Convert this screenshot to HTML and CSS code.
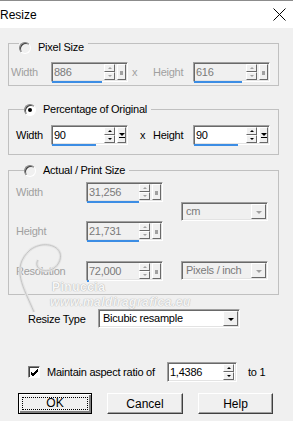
FILE: index.html
```html
<!DOCTYPE html>
<html lang="en">
<head>
    <meta charset="UTF-8">
    <meta name="viewport" content="width=device-width, initial-scale=1.0">
    <title>Resize</title>
    <link rel="stylesheet" href="styles.css">
</head>
<body>

    <div class="window">

        <!-- Title bar -->
        <div class="titlebar">
            <span class="title">Resize</span>
            <svg class="close" width="13" height="13" viewBox="0 0 13 13">
                <path d="M0.5 0.5 L12.5 12.5 M12.5 0.5 L0.5 12.5" stroke="#000" stroke-width="1" fill="none"/>
            </svg>
        </div>

        <div class="content">

            <!-- Pixel size -->
            <fieldset class="group group-pixel off">
                <legend><span class="radio"></span>Pixel Size</legend>
                <div class="row">
                    <span class="lbl lbl-w1">Width</span>
                    <div class="spin">
                        <span class="val">886</span>
                        <span class="arrows"><i class="up"></i><i class="down"></i></span>
                        <span class="extra"><b class="sq"></b></span>
                        <span class="focus f-50"></span>
                    </div>
                    <span class="times t1">x</span>
                    <span class="lbl lbl-h">Height</span>
                    <div class="spin">
                        <span class="val">616</span>
                        <span class="arrows"><i class="up"></i><i class="down"></i></span>
                        <span class="extra"><b class="sq"></b></span>
                        <span class="focus f-48"></span>
                    </div>
                </div>
            </fieldset>

            <!-- Percentage -->
            <fieldset class="group group-pct">
                <legend><span class="radio checked"></span>Percentage of Original</legend>
                <div class="row">
                    <span class="lbl lbl-w2">Width</span>
                    <div class="spin on">
                        <span class="val">90</span>
                        <span class="arrows"><i class="up"></i><i class="down"></i></span>
                        <span class="extra"><b class="drop"></b></span>
                        <span class="focus f-44"></span>
                    </div>
                    <span class="times t2">x</span>
                    <span class="lbl lbl-h2">Height</span>
                    <div class="spin on">
                        <span class="val">90</span>
                        <span class="arrows"><i class="up"></i><i class="down"></i></span>
                        <span class="extra"><b class="drop"></b></span>
                        <span class="focus f-44"></span>
                    </div>
                </div>
            </fieldset>

            <!-- Actual / print size -->
            <fieldset class="group group-print off">
                <legend><span class="radio"></span>Actual / Print Size</legend>
                <div class="print-grid">
                    <span class="lbl">Width</span>
                    <div class="spin">
                        <span class="val">31,256</span>
                        <span class="arrows"><i class="up"></i><i class="down"></i></span>
                        <span class="extra"><b class="sq"></b></span>
                        <span class="focus f-52"></span>
                    </div>
                    <div class="combo combo-unit">
                        <span class="combo-text">cm</span>
                        <span class="combo-btn"><i class="down"></i></span>
                    </div>

                    <span class="lbl">Height</span>
                    <div class="spin">
                        <span class="val">21,731</span>
                        <span class="arrows"><i class="up"></i><i class="down"></i></span>
                        <span class="extra"><b class="sq"></b></span>
                        <span class="focus f-52"></span>
                    </div>

                    <span class="lbl">Resolution</span>
                    <div class="spin">
                        <span class="val">72,000</span>
                        <span class="arrows"><i class="up"></i><i class="down"></i></span>
                        <span class="extra"><b class="sq"></b></span>
                        <span class="focus f-2"></span>
                    </div>
                    <div class="combo combo-res">
                        <span class="combo-text">Pixels / inch</span>
                        <span class="combo-btn"><i class="down"></i></span>
                    </div>
                </div>
            </fieldset>

            <!-- Resize type -->
            <div class="type-row">
                <span class="type-lbl">Resize Type</span>
                <div class="combo combo-type on">
                    <span class="combo-text">Bicubic resample</span>
                    <span class="combo-btn"><i class="down"></i></span>
                </div>
            </div>

            <!-- Aspect ratio -->
            <div class="aspect-row">
                <span class="check">
                    <svg width="9" height="9" viewBox="0 0 9 9">
                        <path d="M1 4 L3 6 L8 1 M1 5 L3 7 L8 2 M1 6 L3 8 L8 3" stroke="#000" stroke-width="1" fill="none"/>
                    </svg>
                </span>
                <span class="aspect-lbl">Maintain aspect ratio of</span>
                <div class="spin on spin-ratio">
                    <span class="val">1,4386</span>
                    <span class="arrows"><i class="up"></i><i class="down"></i></span>
                </div>
                <span class="to-one">to 1</span>
            </div>

            <!-- Buttons -->
            <div class="buttons">
                <button class="btn btn-default"><span>OK</span></button>
                <button class="btn btn-cancel">Cancel</button>
                <button class="btn btn-help">Help</button>
            </div>
        </div>

        <!-- Watermark -->
        <div class="watermark">
            <svg class="wm-swirl" width="70" height="90" viewBox="0 0 70 90">
                <path d="M30 86 C20 62 6 42 26 24 C42 12 64 22 54 38 C46 50 28 44 34 34" stroke="#e4e4e4" stroke-width="3" fill="none"/>
                <path d="M30 86 C20 62 6 42 26 24 C42 12 64 22 54 38 C46 50 28 44 34 34" stroke="#c6c6c6" stroke-width="1" fill="none"/>
            </svg>
            <span class="wm-name">Pinuccia</span>
            <span class="wm-url">www.maldiragrafica.eu</span>
        </div>
    </div>

</body>
</html>
```

FILE: styles.css
```css
body {
    margin: 0;
    font-family: "Liberation Sans", Arial, sans-serif;
    font-size: 11px;
    letter-spacing: -0.25px;
    color: #000;
    background: #f0f0f0;
}

.window {
    position: relative;
    width: 293px;
    height: 421px;
    overflow: hidden;
    background: #f0f0f0;
}

/* title bar */
.titlebar {
    height: 27px;
    background: #fff;
    border-top: 1px solid #8c8c8c;
    display: flex;
    align-items: center;
    justify-content: space-between;
    font-size: 12px;
    letter-spacing: 0;
}
.close {
    margin-right: 7px;
}

.content {
    padding: 5px 14px 0 8px;
}

/* group boxes */
.group {
    margin: 0;
    padding: 0 0 3px 2px;
    border: 1px solid #c0c0c0;
    min-width: 0;
}
.group legend {
    margin-left: 8px;
    padding: 0 4px 0 0;
    line-height: 13px;
    display: flex;
    align-items: center;
}
.group-pixel legend {
    padding-top: 8px;
}
.group-pct {
    margin-top: 17px;
    padding: 0 0 9px 7px;
}
.group-print {
    margin-top: 9px;
    padding: 0 0 13px 7px;
}

.radio {
    display: inline-block;
    width: 10px;
    height: 10px;
    margin-right: 7px;
    border-radius: 50%;
    border: 1px solid;
    border-color: #808080 #fff #fff #808080;
    box-shadow: inset 1px 1px 0 #404040;
    background: #f0f0f0;
    position: relative;
}
.radio.checked {
    background: #fff;
}
.radio.checked::after {
    content: "";
    position: absolute;
    left: 3px;
    top: 3px;
    width: 4px;
    height: 4px;
    border-radius: 50%;
    background: #000;
}

.row {
    display: flex;
    align-items: center;
    height: 20px;
    margin-top: 8px;
}
.group-pct .row {
    margin-top: 9px;
}

.lbl {
    color: #000;
}
.off .lbl {
    color: #a0a0a0;
}
.lbl-w1 { width: 40px; }
.lbl-w2 { width: 35px; }
.lbl-h { width: 40px; margin-left: 15px; }
.lbl-h2 { width: 40px; margin-left: 7px; }
.times { width: 6px; }
.t1 { margin-left: 4px; color: #a0a0a0; }
.t2 { margin-left: 12px; }

/* spin edit */
.spin {
    position: relative;
    display: flex;
    box-sizing: border-box;
    width: 77px;
    height: 20px;
    border: 1px solid;
    border-color: #a0a0a0 #fff #fff #a0a0a0;
    box-shadow: inset 1px 1px 0 #696969, inset -1px -1px 0 #e3e3e3;
    padding: 1px 1px 1px 2px;
    background: #f0f0f0;
}
.spin.on {
    background: #fff;
}
.val {
    flex: 1;
    line-height: 16px;
    color: #7a7a7a;
}
.spin.on .val {
    color: #000;
}
.arrows {
    width: 11px;
    display: flex;
    flex-direction: column;
    margin-right: 2px;
}
.arrows i, .extra, .combo-btn {
    position: relative;
    box-sizing: border-box;
    background: #f0f0f0;
    border: 1px solid;
    border-color: #fff #696969 #696969 #fff;
}
.arrows i {
    flex: 1;
}
.arrows i::after, .combo-btn i::after {
    content: "";
    position: absolute;
    left: 50%;
    top: 50%;
    margin-left: -2px;
    margin-top: -1px;
    border-left: 2px solid transparent;
    border-right: 2px solid transparent;
}
.arrows .up::after {
    border-bottom: 2px solid #a0a0a0;
}
.arrows .down::after {
    border-top: 2px solid #a0a0a0;
}
.spin.on .arrows .up::after {
    border-bottom-color: #000;
}
.spin.on .arrows .down::after {
    border-top-color: #000;
}
.extra {
    width: 9px;
}
.extra .sq {
    position: absolute;
    left: 2px;
    top: 6px;
    width: 3px;
    height: 4px;
    background: #a0a0a0;
}
.extra .drop {
    position: absolute;
    left: 1px;
    top: 5px;
    border-left: 3px solid transparent;
    border-right: 3px solid transparent;
    border-top: 3px solid #000;
}
.extra .drop::after {
    content: "";
    position: absolute;
    left: -3px;
    top: 1px;
    width: 6px;
    border-top: 1px solid #000;
}
.focus {
    position: absolute;
    left: 0;
    bottom: -2px;
    height: 2px;
    background: #3c8de4;
}
.f-50 { width: 50px; }
.f-48 { width: 48px; }
.f-44 { width: 44px; }
.f-52 { width: 52px; }
.f-2 { width: 2px; }

/* print size grid */
.print-grid {
    display: grid;
    grid-template-columns: 52px 77px 87px;
    grid-template-rows: 20px 20px 21px;
    column-gap: 18px;
    row-gap: 19px;
    align-items: center;
    margin-top: 5px;
}
.combo-unit {
    grid-column: 3;
    grid-row: 1 / 3;
}
.combo-res {
    grid-column: 3;
    grid-row: 3;
}

/* combo box */
.combo {
    display: flex;
    box-sizing: border-box;
    height: 19px;
    border: 1px solid;
    border-color: #a0a0a0 #fff #fff #a0a0a0;
    box-shadow: inset 1px 1px 0 #696969, inset -1px -1px 0 #e3e3e3;
    padding: 1px;
    background: #f0f0f0;
}
.combo.on {
    background: #fff;
}
.combo-text {
    flex: 1;
    padding-left: 3px;
    line-height: 15px;
    color: #7a7a7a;
    white-space: nowrap;
}
.combo.on .combo-text {
    color: #000;
}
.combo-btn {
    width: 15px;
}
.combo-btn i::after {
    border-left-width: 3px;
    border-right-width: 3px;
    margin-left: -3px;
    border-top: 3px solid #a0a0a0;
}
.combo.on .combo-btn i::after {
    border-top-color: #000;
}

/* resize type */
.type-row {
    display: flex;
    align-items: center;
    margin-top: 14px;
    padding-left: 20px;
}
.type-lbl {
    width: 70px;
}
.combo-type {
    width: 142px;
}

/* aspect ratio */
.aspect-row {
    display: flex;
    align-items: center;
    margin-top: 34px;
    padding-left: 20px;
    white-space: nowrap;
}
.check {
    box-sizing: border-box;
    width: 12px;
    height: 12px;
    border: 1px solid;
    border-color: #808080 #fff #fff #808080;
    box-shadow: inset 1px 1px 0 #404040;
    background: #fff;
    padding: 1px 0 0 1px;
    display: flex;
}
.aspect-lbl {
    margin-left: 7px;
    width: 120px;
}
.spin-ratio {
    width: 70px;
}
.spin-ratio .arrows {
    margin-right: 1px;
}
.to-one {
    margin-left: 11px;
}

/* buttons */
.buttons {
    display: flex;
    gap: 15px;
    margin-top: 11px;
    padding-left: 10px;
}
.btn {
    box-sizing: border-box;
    height: 21px;
    margin: 0;
    padding: 0;
    font-family: "Liberation Sans", Arial, sans-serif;
    font-size: 12px;
    color: #000;
    background: #f0f0f0;
    border: 1px solid;
    border-color: #fff #404040 #404040 #fff;
    box-shadow: inset -1px -1px 0 #a0a0a0;
}
.btn-default {
    width: 74px;
    border: 1px solid #000;
    box-shadow: inset 1px 1px 0 #fff, inset -2px -2px 0 #808080, inset -1px -1px 0 #404040;
    padding: 3px;
}
.btn-default span {
    display: block;
    height: 100%;
    box-sizing: border-box;
    border: 1px dotted #000;
    line-height: 11px;
}
.btn-cancel { width: 76px; }
.btn-help { width: 75px; }

/* watermark */
.watermark {
    position: absolute;
    left: 4px;
    top: 226px;
    width: 220px;
    height: 82px;
    pointer-events: none;
    letter-spacing: 0.5px;
}
.wm-swirl {
    position: absolute;
    left: 0;
    top: 0;
}
.wm-name {
    position: absolute;
    left: 48px;
    top: 55px;
    font-weight: bold;
    font-size: 12px;
    line-height: 13px;
    color: #f7f7f7;
    text-shadow: 0 0 1px #b0b0b0, 0 0 1px #b0b0b0;
}
.wm-url {
    position: absolute;
    left: 46px;
    top: 70px;
    font-weight: bold;
    font-style: italic;
    font-size: 12px;
    line-height: 12px;
    color: #f4f4f4;
    text-shadow: 0 0 1px #b8b8b8, 0 0 1px #b8b8b8;
}
```
